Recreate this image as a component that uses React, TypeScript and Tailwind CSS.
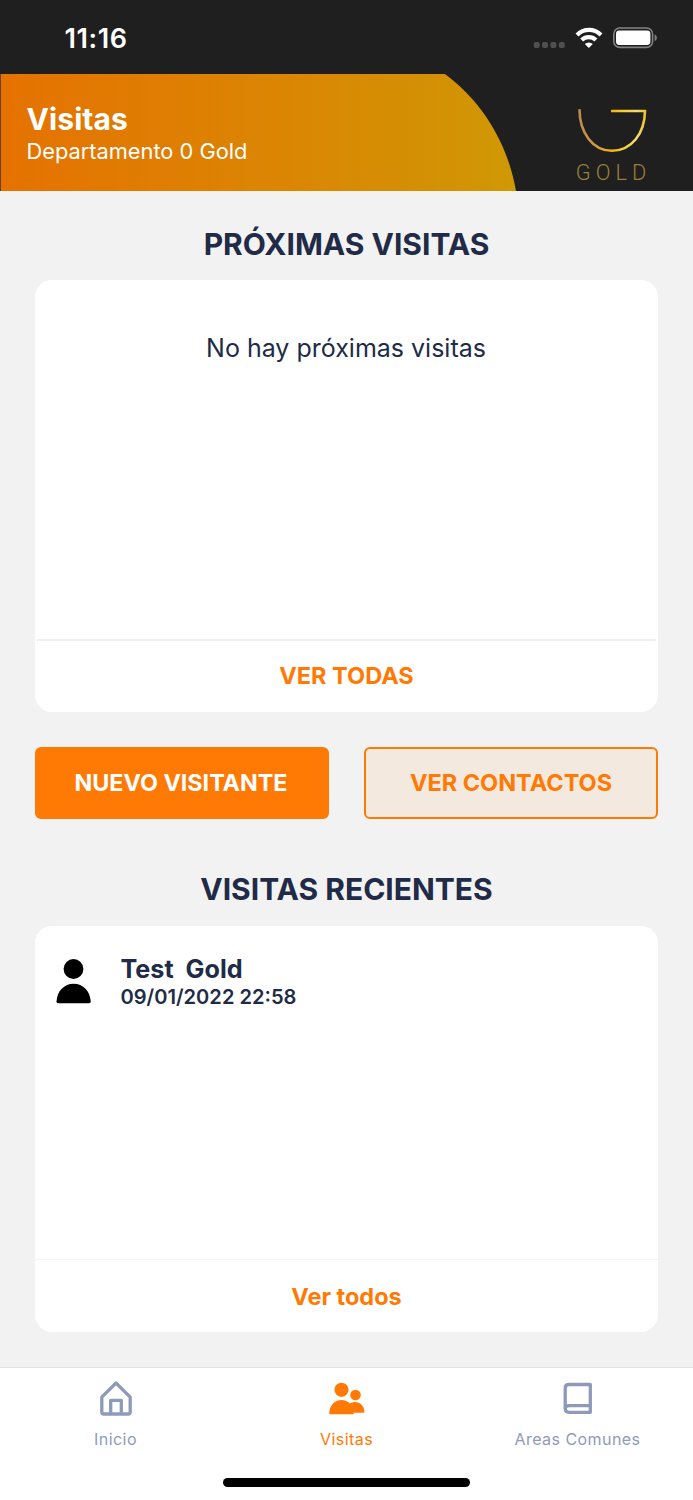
import React from "react";

function StatusBar() {
  return (
    <div className="flex h-[74px] items-start justify-between bg-[#1f1f1f] text-white">
      <span className="ml-[64.5px] mt-[23px] text-[27px] leading-8 font-semibold tracking-[0.6px]">11:16</span>
      <svg className="mt-[22px] mr-[33px]" width="130" height="32" viewBox="530 22 130 32">
        <g fill="#505050">
          <rect x="533.7" y="42" width="6" height="6" rx="2" />
          <rect x="542" y="42" width="6" height="6" rx="2" />
          <rect x="550.4" y="42" width="6" height="6" rx="2" />
          <rect x="558.8" y="42" width="6" height="6" rx="2" />
        </g>
        <g fill="none" stroke="#fff" strokeWidth="4.2">
          <path d="M577 34.9a17 17 0 0 1 24 0" />
          <path d="M581.7 40a10.4 10.4 0 0 1 14.2 0" />
        </g>
        <path d="M588.8 47.9l-4-3.9a5.8 5.8 0 0 1 8 0z" fill="#fff" />
        <rect x="613.8" y="28" width="38.8" height="19.4" rx="6" fill="none" stroke="#828282" strokeWidth="1.6" />
        <rect x="616" y="30.6" width="34.4" height="14.4" rx="3.4" fill="#fff" />
        <path d="M654.6 34.6c3 1 3 5.6 0 6.6z" fill="#828282" />
      </svg>
    </div>
  );
}

function Header() {
  return (
    <header className="relative flex h-[117px] justify-between bg-[#1f1f1f] text-white">
      <svg className="absolute inset-0" width="693" height="117" viewBox="0 74 693 117">
        <defs>
          <linearGradient id="band" gradientUnits="userSpaceOnUse" x1="0" y1="0" x2="516" y2="0">
            <stop offset="0" stopColor="#e57200" />
            <stop offset="0.5" stopColor="#dc8403" />
            <stop offset="0.9" stopColor="#d29304" />
            <stop offset="1" stopColor="#d09904" />
          </linearGradient>
        </defs>
        <path d="M.6 74H445C485 104 508 146 516 191H.6z" fill="url(#band)" />
      </svg>
      <div className="relative ml-[26.5px] mt-[27px] flex flex-col items-start">
        <h1 className="text-[30px] leading-9 font-bold tracking-[0.1px]">Visitas</h1>
        <p className="mt-[1px] text-[21.8px] leading-[26px]">Departamento 0 Gold</p>
      </div>
      <div className="relative mr-[40px] mt-[32px] flex w-[80px] flex-col items-center">
        <svg width="80" height="50" viewBox="573 106 80 50">
          <defs>
            <linearGradient id="cup" x1="0" x2="1" y1="0" y2="0">
              <stop offset="0" stopColor="#bd8b4d" />
              <stop offset="0.3" stopColor="#d7a040" />
              <stop offset="0.45" stopColor="#f5ad08" />
              <stop offset="0.65" stopColor="#f5cf2c" />
              <stop offset="0.88" stopColor="#f2dc72" />
              <stop offset="1" stopColor="#ecc52f" />
            </linearGradient>
          </defs>
          <path d="M579.5 109.3C579.5 133 593 150.8 612 150.8S644.8 134 645 111H611" fill="none" stroke="url(#cup)" strokeWidth="2.6" />
        </svg>
        <span className="mt-[4px] ml-[1px] font-[Roboto] text-[21.8px] leading-[26px] font-light tracking-[5px] text-[#98803a]">GOLD</span>
      </div>
    </header>
  );
}

function SectionTitle({ children }: { children: React.ReactNode }) {
  return <h2 className="text-center text-[30px] leading-9 font-bold">{children}</h2>;
}

function TabBar() {
  return (
    <nav className="mt-[35px] flex h-[133px] flex-col items-center border-t border-[#e2e2e2] bg-white">
      <div className="grid h-[114px] w-full grid-cols-3 text-[16px] leading-5 tracking-[0.45px] text-[#8e9bb8]">
        <div className="flex flex-col items-center">
          <svg className="mt-[8px]" width="44" height="44" viewBox="94 1376 44 44" fill="none" stroke="#8e9bb8" strokeWidth="3.3" strokeLinejoin="round">
            <path d="M116 1383l14.2 14.2V1412q0 2-2 2H103.8q-2 0-2-2V1397.2z" />
            <path d="M110.7 1414V1400.4H121.3V1414" />
          </svg>
          <span className="mt-[9px]">Inicio</span>
        </div>
        <div className="flex flex-col items-center text-[#ff7a05]">
          <svg className="mt-[8px]" width="44" height="44" viewBox="325 1376 44 44" fill="currentColor">
            <circle cx="341.5" cy="1389.8" r="7.1" />
            <circle cx="355.5" cy="1395" r="5.3" />
            <path d="M330.5 1414.2q-1.3 0-1.3-1.5c.7-7.5 5.5-12.7 12.3-12.7 3.4 0 6.3 1.2 8.5 3.5 1.6-1 3.4-1.5 5.2-1.5 5 0 8.6 3.9 9.3 9.4q.1 1.3-1.2 1.3H354q-.2 1.5-1.6 1.5z" />
          </svg>
          <span className="mt-[9px]">Visitas</span>
        </div>
        <div className="flex flex-col items-center">
          <svg className="mt-[8px]" width="44" height="44" viewBox="556 1376 44 44" fill="none" stroke="#8e9bb8" strokeWidth="3.3" strokeLinejoin="round">
            <path d="M569 1384.5H590.3V1412.3H569q-3.8 0-3.8-3.8V1388.3q0-3.8 3.8-3.8z" />
            <path d="M565.2 1409q0-3.3 3.8-3.3H590.3" />
          </svg>
          <span className="mt-[9px]">Areas Comunes</span>
        </div>
      </div>
      <div className="-mt-[4px] h-[8.5px] w-[247px] rounded-full bg-black" />
    </nav>
  );
}

export default function App() {
  return (
    <div className="flex h-[1500px] w-[693px] flex-col overflow-hidden bg-[#f2f2f2] font-[Inter,sans-serif] text-[#212b47]">
      <StatusBar />
      <Header />
      <main className="flex flex-col px-[35px] pt-[35px]">
        <SectionTitle>PRÓXIMAS VISITAS</SectionTitle>
        <section className="mt-[18px] flex h-[432px] flex-col rounded-[17px] bg-white">
          <p className="mt-[52px] pr-px text-center text-[25px] leading-8">No hay próximas visitas</p>
          <button className="mt-auto h-[73px] rounded-[4px] border-x-2 border-t-2 border-x-transparent border-t-[#f0f0f4] pb-[2px] text-[23.5px] font-bold text-[#ff7a05]">VER TODAS</button>
        </section>
        <div className="mt-[34.5px] grid grid-cols-2 gap-[35px] text-[23.5px] font-bold">
          <button className="h-[72px] rounded-[6px] bg-[#ff7a05] pt-px pr-[2px] text-[23.3px] text-white">NUEVO VISITANTE</button>
          <button className="h-[72px] rounded-[6px] border-2 border-[#ff7a05] bg-[#f4e9df] text-[#ff7a05]">VER CONTACTOS</button>
        </div>
        <div className="mt-[52.5px]">
          <SectionTitle>VISITAS RECIENTES</SectionTitle>
        </div>
        <section className="mt-[18.5px] flex h-[406.5px] flex-col rounded-[17px] bg-white">
          <div className="flex">
            <svg className="mt-[32.5px] ml-[21px]" width="35" height="46" viewBox="56 958 35 46">
              <circle cx="73.5" cy="969" r="9.9" />
              <path d="M58 1003.2q-1.6 0-1.5-2c.7-10 7.5-17.5 17.1-17.5s16.4 7.5 17.1 17.5q.1 2-1.5 2z" />
            </svg>
            <div className="mt-[28.5px] ml-[29.5px] flex flex-col items-start">
              <strong className="text-[25.2px] leading-[30px] font-bold whitespace-pre">Test  Gold</strong>
              <span className="mt-[1px] text-[20.1px] leading-6 font-semibold">09/01/2022 22:58</span>
            </div>
          </div>
          <button className="mt-auto h-[73px] border-t border-[#f3f3f3] pt-[2px] text-[23.5px] font-bold text-[#ff7a05]">Ver todos</button>
        </section>
      </main>
      <TabBar />
    </div>
  );
}
